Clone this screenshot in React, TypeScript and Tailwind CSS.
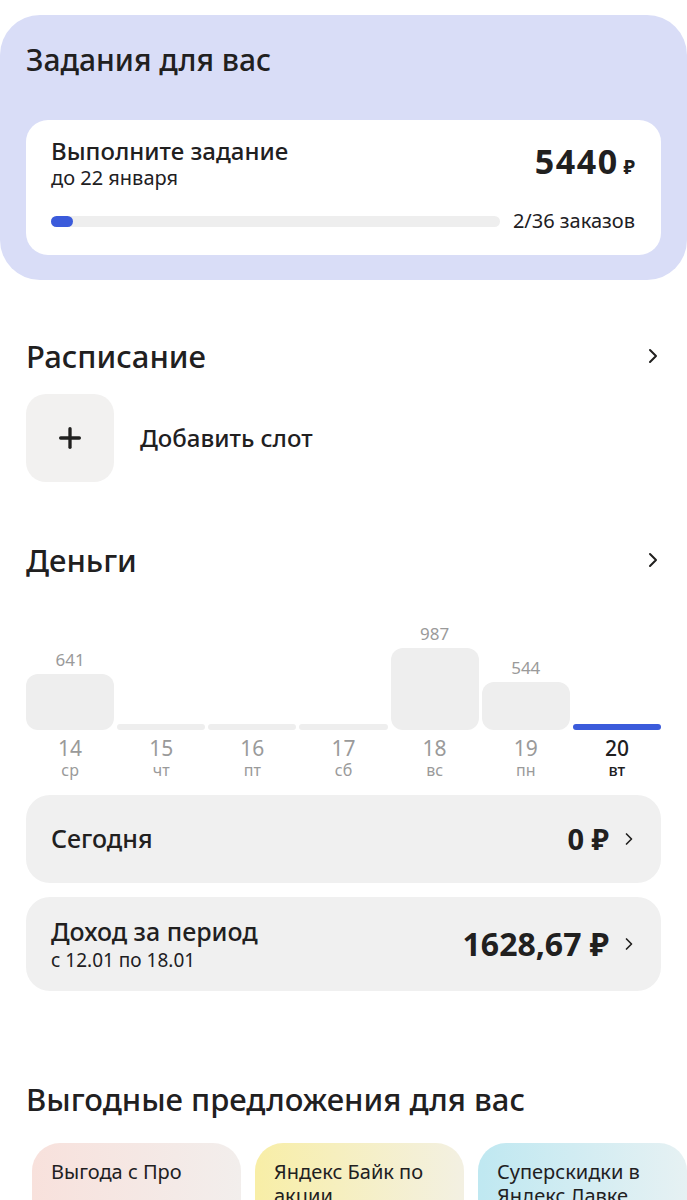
import { ChevronRight, Plus } from 'lucide-react';

const days = [
    { value: '641', height: 56, num: '14', day: 'ср' },
    { value: '', height: 6, num: '15', day: 'чт' },
    { value: '', height: 6, num: '16', day: 'пт' },
    { value: '', height: 6, num: '17', day: 'сб' },
    { value: '987', height: 82, num: '18', day: 'вс' },
    { value: '544', height: 48, num: '19', day: 'пн' },
    { value: '', height: 6, num: '20', day: 'вт', active: true },
];

const offers = [
    { title: 'Выгода с Про', bg: 'bg-gradient-to-r from-[#f8e1dc] to-[#f2eeec]' },
    { title: 'Яндекс Байк по акции', bg: 'bg-gradient-to-r from-[#f8eea6] to-[#f3f0e2]' },
    { title: 'Суперскидки в Яндекс Лавке', bg: 'bg-gradient-to-r from-[#bfe8f1] to-[#e6f1f3]' },
];

const SectionHeader = ({ title }: { title: string }) => (
    <div className="flex items-center justify-between pl-[26px] pr-[22px]">
        <h2 className="text-[31px] font-medium text-[#21201f] leading-9">{title}</h2>
        <ChevronRight className="w-6 h-6 text-[#21201f]" strokeWidth={2} />
    </div>
);

export default function App() {
    return (
        <div className="w-[687px] h-[1200px] overflow-hidden bg-white font-['Noto_Sans',sans-serif] text-[#21201f]">
            <div className="mt-[15px] bg-[#d9ddf7] rounded-[40px] px-[26px] pt-[27px] pb-[25px]">
                <h1 className="text-[30px] font-medium leading-9">Задания для вас</h1>
                <div className="mt-[42px] bg-white rounded-[22px] pl-[25px] pr-[26px] pt-[16px] pb-[22px]">
                    <div className="flex items-start justify-between">
                        <div>
                            <div className="text-[24px] font-medium leading-[30px]">Выполните задание</div>
                            <div className="text-[20px] leading-6">до 22 января</div>
                        </div>
                        <div className="mt-[7px] flex items-baseline gap-[5px]">
                            <span className="text-[34px] font-bold tracking-[1.5px] leading-9">5440</span>
                            <span className="text-[19px] font-bold">₽</span>
                        </div>
                    </div>
                    <div className="mt-[19px] flex items-center gap-[13px]">
                        <div className="flex-1 h-[11px] rounded-full bg-[#eeeeee]">
                            <div className="w-[22px] h-[11px] rounded-full bg-[#3b5bdb]" />
                        </div>
                        <span className="text-[20px] leading-6">2/36 заказов</span>
                    </div>
                </div>
            </div>

            <div className="mt-[58px]">
                <SectionHeader title="Расписание" />
                <div className="mt-[20px] pl-[26px] flex items-center gap-[26px]">
                    <div className="w-[88px] h-[88px] rounded-[20px] bg-[#f2f1f0] flex items-center justify-center">
                        <Plus className="w-8 h-8" strokeWidth={2.5} />
                    </div>
                    <span className="text-[24px] font-medium">Добавить слот</span>
                </div>
            </div>

            <div className="mt-[60px]">
                <SectionHeader title="Деньги" />
                <div className="mt-[42px] px-[26px] grid grid-cols-7 gap-[3px]">
                    {days.map((d) => (
                        <div key={d.num} className="flex flex-col items-center">
                            <div className="h-[110px] w-full flex flex-col justify-end items-center">
                                {d.value && <span className="text-[17px] text-[#9a9a9a] leading-5 mb-[4px]">{d.value}</span>}
                                <div
                                    className={d.active ? 'w-full shrink-0 rounded-full bg-[#3b5bdb]' : 'w-full shrink-0 rounded-[12px] bg-[#eeeeee]'}
                                    style={{ height: d.height }}
                                />
                            </div>
                            <span className={d.active ? 'mt-[6px] text-[21px] leading-6 text-[#21201f] font-medium' : 'mt-[6px] text-[21px] leading-6 text-[#9a9a9a]'}>
                                {d.num}
                            </span>
                            <span className={d.active ? 'text-[16px] leading-5 text-[#21201f] font-medium' : 'text-[16px] leading-5 text-[#9a9a9a]'}>
                                {d.day}
                            </span>
                        </div>
                    ))}
                </div>

                <div className="mt-[15px] px-[26px] flex flex-col gap-[14px]">
                    <div className="h-[88px] rounded-[24px] bg-[#f0f0f0] pl-[25px] pr-[22px] flex items-center justify-between">
                        <span className="text-[25px] font-medium">Сегодня</span>
                        <div className="flex items-center gap-[10px]">
                            <span className="text-[29px] font-bold">0 ₽</span>
                            <ChevronRight className="w-5 h-5" strokeWidth={2} />
                        </div>
                    </div>
                    <div className="h-[94px] rounded-[24px] bg-[#f0f0f0] pl-[25px] pr-[22px] flex items-center justify-between">
                        <div>
                            <div className="text-[25px] font-medium leading-[32px]">Доход за период</div>
                            <div className="text-[19px] leading-[26px]">с 12.01 по 18.01</div>
                        </div>
                        <div className="flex items-center gap-[10px]">
                            <span className="text-[32px] font-bold">1628,67 ₽</span>
                            <ChevronRight className="w-5 h-5" strokeWidth={2} />
                        </div>
                    </div>
                </div>
            </div>

            <h2 className="mt-[90px] pl-[26px] text-[31px] font-medium leading-9">Выгодные предложения для вас</h2>
            <div className="mt-[26px] pl-[32px] flex gap-[14px]">
                {offers.map((o) => (
                    <div key={o.title} className={`w-[209px] h-[120px] shrink-0 rounded-[28px] ${o.bg} px-[19px] pt-[17px]`}>
                        <span className="text-[20px] leading-6 block">{o.title}</span>
                    </div>
                ))}
            </div>
        </div>
    );
}
